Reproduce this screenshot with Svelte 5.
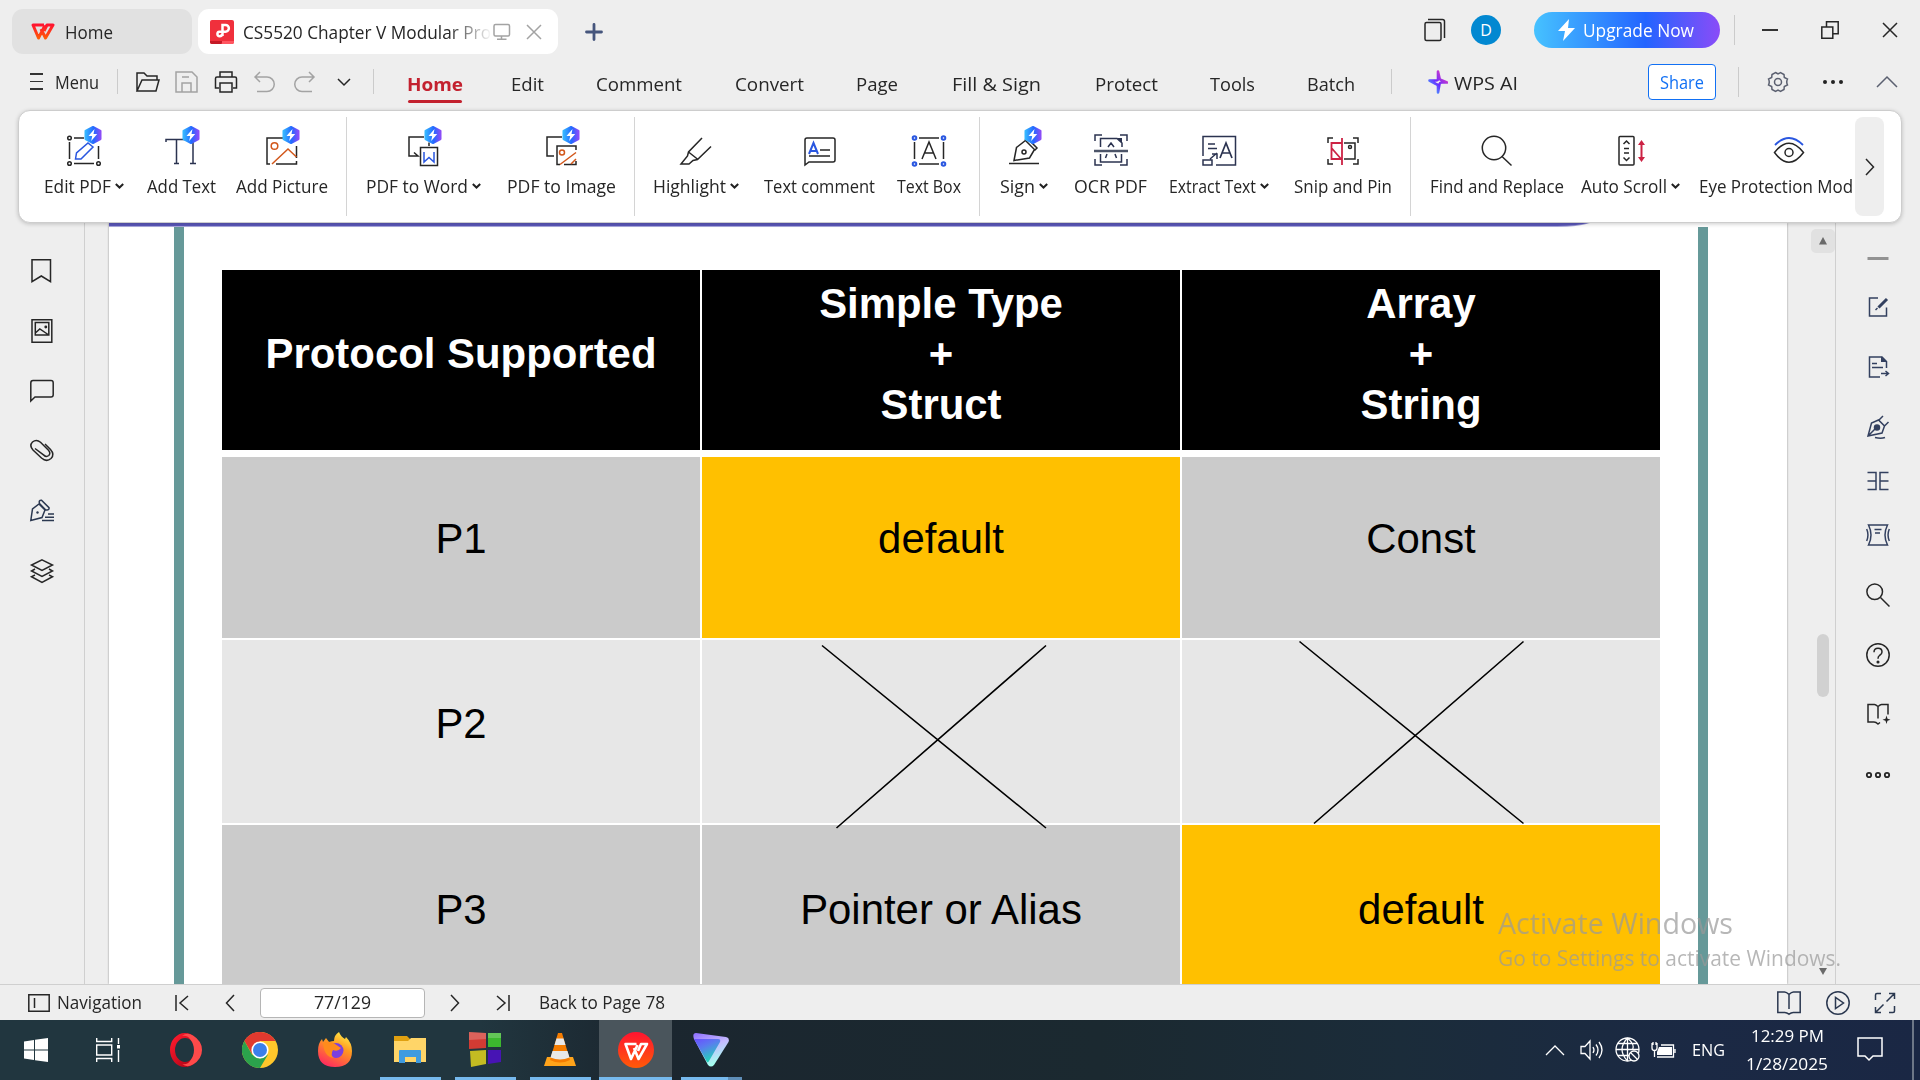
<script>
  // Squeezes or stretches a label horizontally so it takes exactly `width` pixels in the flow.
  function fit(node, width) {
    const natural = node.getBoundingClientRect().width;
    node.style.transform = `scaleX(${width / natural})`;
    node.style.marginRight = `${width - natural}px`;
  }

  const icons = {
    // quick access bar
    open: [24, 22, '<path d="M1 20V2h7l3 3h10v4M1 20 6 9h17l-3 11z"/>'],
    save: [24, 24, '<path d="M1 2h16l5 5v15H1zM7 22v-9h9v9M7 7h7"/>'],
    print: [24, 22, '<path d="M6 6V1h12v5M5 17H1.500V7.500q0-1.500 1.500-1.500h18q1.500 0 1.500 1.500V17H19M6 12h12v9H6z"/>'],
    undo: [24, 22, '<path d="M7 1 2 6l5 5M2 6h12a7.200 7.200 0 0 1 0 14.500H4"/>'],
    redo: [24, 22, '<path d="m17 1 5 5-5 5M22 6H10a7.200 7.200 0 0 0 0 14.500h10"/>'],
    down: [14, 8, '<path d="m1 1 6 6 6-6"/>'],
    // ribbon
    editPdf: [40, 40, '<circle cx="5.500" cy="12" r="1.800"/><circle cx="5.500" cy="37.500" r="1.800"/><circle cx="34.500" cy="37.500" r="1.800"/><path d="M10 12h10M5.500 16v17M10 37.500h20M34.500 20v13"/><path stroke="#2a57e0" d="m11.500 33 1-6L24 17l5 4-12 12z"/>'],
    addText: [40, 40, '<path stroke="#2b3350" d="M4 16v-2.500h19M14.500 13.500v24M12 37.500h5M31 15v22.500M28 37.500h6"/>'],
    addPicture: [40, 40, '<path d="M24 12H5v26h3M34.500 20v12M14 38h20.500v-3"/><g stroke="#d2571b"><circle cx="12.500" cy="20" r="3.300"/><path d="m10 38 16-15 8.500 8"/></g>'],
    pdfWord: [40, 40, '<path d="M25 20v-3.500M20 11H5v19h5l4 0-4-3.500"/><path d="M16.500 21.500h17v18h-17z"/><path stroke="#2a57e0" d="M20 26v10l5-4.500 5 4.500V26"/>'],
    pdfImage: [40, 40, '<path d="M20 11H5v19h5l2 0"/><path d="M34 24v-4H15v18.500h3M22 38.500h12V35"/><g stroke="#d2571b"><circle cx="20" cy="26.500" r="2.500"/><path d="m18 38.500 16-12M29 38l5-5"/></g>'],
    highlight: [40, 40, '<path d="M26 12 12.500 26l-1 4-6.500 8h8l4-3.500 4.500-1L35 20.500M12.500 26l9.500 7.500"/>'],
    comment: [40, 40, '<path d="M5 39V14q0-2 2-2h26q2 0 2 2v20q0 2-2 2H9z"/><path d="M20 24h10M9 30h21"/><path stroke="#2a57e0" stroke-width="2" d="m9 28 4.500-11L18 28M11 25h5"/>'],
    textBox: [40, 40, '<path d="M10 12h20M10 38h20M5.500 16v17M34.500 16v17"/><path d="m13 33 7-17 7 17M15.500 27h9"/><g stroke="#2a57e0" stroke-width="2"><circle cx="5.500" cy="12" r="1.800"/><circle cx="34.500" cy="12" r="1.800"/><circle cx="5.500" cy="38" r="1.800"/><circle cx="34.500" cy="38" r="1.800"/></g>'],
    sign: [40, 40, '<path d="M5 37.500h30M10 34.500l2.500-13 9-7 9 9-5 8.500zM21 14l2-2 10 10-2.500 2.500"/><circle cx="20" cy="26" r="2"/>'],
    ocr: [40, 40, '<path stroke="#2b3350" d="M4 15V9h7M29 9h7v6M4 33v6h7M29 39h7v-6M9.500 21v-8.500H26l5 4.500v4M9.500 28v8h21v-8M17 21l3-4 3 4M16 28l-1.500 4M24 28l1.500 4"/><path stroke="#4c5468" stroke-width="2.400" d="M3 25h34"/><path fill="#2b3350" stroke="none" d="M26 12h5v5z"/>'],
    extract: [40, 40, '<path stroke="#2b3350" d="M4 30V10.500h32.500V39H17M9 18h7M9 22.500h9M9 34h4v5H4v-5zM11 33l7-6M13 28h5v5"/><path stroke="#2b3350" stroke-width="1.700" d="m21 32 6-15 6 15M23 27h8"/>'],
    snip: [40, 40, '<path d="M5 17v-5h5M30 12h5v5M5 33v5h5M30 38h5v-5M21 17h11v16H21"/><circle cx="27" cy="21" r="1.500"/><path stroke="#cc2244" stroke-width="1.800" d="M19 12v27M19 17H8.500v16H19M8.500 22 19 34"/>'],
    find: [40, 40, '<circle cx="17" cy="22" r="11.700"/><path d="m25 30.500 9.500 9"/>'],
    autoScroll: [40, 40, '<rect x="8" y="10.500" width="15" height="28.500" rx="1"/><path d="m12.500 18 3-3 3 3M13 22.500h5M13 27h5M12.500 31.500l3 3 3-3"/><path stroke="#cc2244" stroke-width="2" d="M30.500 17v17"/><path fill="#cc2244" stroke="none" d="m30.500 14 3.500 5h-7zM30.500 36l3.500-5h-7z"/>'],
    eye: [40, 40, '<path stroke="#2a57e0" stroke-width="1.800" d="M6 19q14-14 28 0"/><path d="M5.500 26.500Q20 8 34.500 26.500 20 46 5.500 26.500z"/><circle cx="20" cy="26.500" r="4"/>'],
    // left rail
    bookmark: [24, 24, '<path d="M2 .7h18.500v22L11.300 17 2 22.700z"/>'],
    thumbs: [24, 24, '<path d="M2 .7h19.800v22.600H2z"/><path d="M5.300 3.500h13.500V16H5.300zM5.300 14l4.500-4 9 6"/><circle cx="15.800" cy="8" r=".7"/>'],
    bubble: [24, 24, '<path d="M.8 22V4q0-2.500 2.200-2.500h18q2.200 0 2.200 2.200v12q0 2.300-2.200 2.300H5z"/>'],
    clip: [24, 24, '<path d="M15 5 20.500 10.500q4.500 5 .5 9-4.500 4-9.500-.5L3 11q-4-4.500-.5-8 4-3.300 8 .3l8 8q2.500 3 .3 5.200-2.600 2-5-.4L5 9.500"/>'],
    penLines: [24, 24, '<path stroke="#2b3850" d="M.8 21.500 2.500 10l6.500-5 6 6-3 7.500zM9.500 4.500q-1-3.500 2-3.300l7.500 7.500q.5 3-3.500 2zM18 15h6M15 18.200h9M12 21.500h12"/><circle cx="7.500" cy="13.500" r="1.200" fill="#2b3850" stroke="none"/>'],
    layers: [24, 24, '<path d="M12 .8 22.500 6 12 11.500 1.500 6zM5 10l-3.500 2L12 17.500 22.500 12 19 10M5 16l-3.500 1.700L12 23.300l10.500-5.600L19 16"/>'],
    // right rail
    minus: [24, 24, '<path stroke="#929292" stroke-width="3" d="M1.500 12.500h21"/>'],
    compose: [24, 24, '<path d="M12 3H3.500v18h17v-8.500"/><path stroke-width="3" d="M12.500 12.500 21 4"/><path d="m9.500 15 2-2"/>'],
    exportDoc: [24, 24, '<path d="M14 22H3.500V2H16l4.500 4.500V13M6 8.500h5M6 12.500h11M15 18.500h7M19.500 16l3 2.500-3 2.500"/><path fill="#33405f" stroke="none" d="M15 1.500V7h6z"/>'],
    pen: [24, 24, '<path d="m2 21 3.500-13 7-3 6 6-2.500 7zM13 5l4-4M18.500 11 22.500 7M2 21l9-9M9 22.500q6 1.500 10 0"/><circle cx="11" cy="12.500" r="2.500" fill="#33405f"/>'],
    split: [24, 24, '<path d="M1.500 3.500H10v17H1.500M1.500 12H10M22.500 3.500H14v17h8.500M14 12h8.500"/>'],
    wrap: [24, 24, '<path d="M2.500 2h19q-5 10 0 20h-19q5-10 0-20zM.7 6q2.500 6 0 12M23.300 6q-2.500 6 0 12M8.500 6.500h7M9 10h5"/>'],
    search: [24, 24, '<circle cx="8.700" cy="8.700" r="7.800"/><path d="M14.500 14.500 23.500 23.500"/>'],
    help: [24, 24, '<circle cx="12" cy="12" r="11.200"/><path d="M8 9.300q0-4 4-4t4 3.700q0 2-2.500 3.500-1.500 1-1.500 3.300"/><circle cx="12" cy="19" r=".8" fill="currentColor"/>'],
    bookStar: [24, 24, '<path d="M12 16.500V4.500Q9.500 2.500 8.500 2.500H2V20h6q2 0 4 2l2-1.500M12 4.500q2.500-2 3.500-2H22v10"/><path fill="currentColor" stroke="none" d="m20.500 13.500 1 3.200 3 1-3 1-1 3.300-1-3.300-3-1 3-1z"/>'],
    rings: [24, 24, '<g stroke-width="1.800"><circle cx="3" cy="12" r="2.200"/><circle cx="12" cy="12" r="2.200"/><circle cx="21" cy="12" r="2.200"/></g>'],
    // status bar
    panel: [22, 18, '<path d="M.8.800h20.400v16.400H.800zM6.500 4v10"/>'],
    first: [14, 18, '<path d="M1 1v16M13 2 5 9l8 7"/>'],
    prev: [10, 18, '<path d="M9 1 1.500 9 9 17"/>'],
    next: [10, 18, '<path d="M1 1 8.500 9 1 17"/>'],
    last: [14, 18, '<path d="M13 1v16M1 2l8 7-8 7"/>'],
    book: [24, 24, '<path stroke="#2b3850" d="M12 3.500Q9.500 1 7.500 1H.8v20.500h7q2 0 4.200 1.700 2.200-1.700 4.200-1.700h7V1h-6.700Q14.500 1 12 3.500zM12 3.500V18"/>'],
    play: [24, 24, '<circle cx="12" cy="12" r="11.200"/><path d="M9.500 6.500v11l8-5.500z"/>'],
    full: [22, 22, '<path d="M1.500 8V3q0-1.500 1.500-1.500h4M15 1.500h5.500V7M12.500 9.500l7.500-7.500M1.500 15v5.500H7M2 20l7.500-7.500M20.500 14v5q0 1.500-1.500 1.500h-4"/>'],
    // window controls
    stack: [22, 24, '<rect x="1" y="4.500" width="16" height="18" rx="1.500"/><path d="M4 1.500h14.500q2 0 2 2V20"/>'],
    restore: [18, 18, '<path d="M.8 6h11v11.200h-11zM5.500 6V.8h11.700v12H12"/>'],
    close: [16, 16, '<path d="m1 1 14 14M15 1 1 15"/>'],
    monitor: [18, 18, '<rect x="1" y="1.500" width="15.500" height="11.500" rx="1.500"/><path d="M8.500 13v3M4 16.200h9.500"/>'],
    gear: [22, 22, '<path d="M8.500 1.500 11 3l2.500-1.500 3.500 2 .3 3L20.500 8q-1.500 3 0 6l-3.200 1.500-.3 3-3.500 2L11 19l-2.500 1.500-3.500-2-.3-3L1.500 14q1.500-3 0-6l3.200-1.500.3-3z"/><circle cx="11" cy="11" r="3.500"/>'],
    up: [22, 12, '<path d="m1 11 10-10 10 10"/>'],
    // tray
    caret: [20, 12, '<path d="m1 11 9-9 9 9"/>'],
    speaker: [24, 20, '<path d="M1 6.500h4L10 1v18l-5-5.500H1zM13 7q2 3 0 6M16 4.500q4 5.500 0 11M19 2q6 8 0 16"/>'],
    globe: [26, 26, '<circle cx="12.500" cy="12.500" r="11.500"/><path d="M12.500 1v23M1 12.500h23M3 6.500h19M3 18.500h12M12.500 1q-11 11.500 0 23M12.500 1q8 7 5 12"/><circle cx="19" cy="19" r="5" fill="#1c2b42"/><path d="m15.500 15.500 7 7"/>'],
    battery: [26, 18, '<path d="M10 4h12.500v12H6M24 8v4M1 2v5q0 2.500 2.500 2.500T6 7V2M2 1v3M5 1v3M3.500 10v6"/><path fill="#fff" stroke="none" d="M8 6h13v8H6v-3z"/>'],
    notify: [26, 26, '<path d="M1 1h24v18H16l-4 4-4-4H1z"/>'],
  };

  const tabs = [
    { t: 'Home', gap: 33, w: 56, on: true }, { t: 'Edit', gap: 48, w: 33 },
    { t: 'Comment', gap: 52, w: 86 }, { t: 'Convert', gap: 53, w: 69 },
    { t: 'Page', gap: 52, w: 42 }, { t: 'Fill & Sign', gap: 54, w: 89 },
    { t: 'Protect', gap: 54, w: 63 }, { t: 'Tools', gap: 52, w: 45 }, { t: 'Batch', gap: 52, w: 48 },
  ];

  const groups = [
    { pad: 25, items: [
      { t: 'Edit PDF', i: 'editPdf', w: 67, gap: 0, menu: true, pro: true },
      { t: 'Add Text', i: 'addText', w: 69, gap: 23, pro: true },
      { t: 'Add Picture', i: 'addPicture', w: 92, gap: 20, pro: true }] },
    { pad: 19, items: [
      { t: 'PDF to Word', i: 'pdfWord', w: 102, gap: 0, menu: true, pro: true },
      { t: 'PDF to Image', i: 'pdfImage', w: 109, gap: 26, pro: true }] },
    { pad: 18, items: [
      { t: 'Highlight', i: 'highlight', w: 73, gap: 0, menu: true },
      { t: 'Text comment', i: 'comment', w: 111, gap: 25 },
      { t: 'Text Box', i: 'textBox', w: 64, gap: 22 }] },
    { pad: 20, items: [
      { t: 'Sign', i: 'sign', w: 35, gap: 0, menu: true, pro: true },
      { t: 'OCR PDF', i: 'ocr', w: 73, gap: 26 },
      { t: 'Extract Text', i: 'extract', w: 87, gap: 22, menu: true },
      { t: 'Snip and Pin', i: 'snip', w: 98, gap: 25 }] },
    { pad: 19, items: [
      { t: 'Find and Replace', i: 'find', w: 134, gap: 0 },
      { t: 'Auto Scroll', i: 'autoScroll', w: 86, gap: 17, menu: true },
      { t: 'Eye Protection Mod', i: 'eye', w: 154, gap: 19, cut: true }] },
  ];

  const leftRail = ['bookmark', 'thumbs', 'bubble', 'clip', 'penLines', 'layers'];
  const rightRail = [
    ['minus', 0], ['compose', 25], ['exportDoc', 36], ['pen', 36], ['split', 30],
    ['wrap', 30], ['search', 36], ['help', 36], ['bookStar', 35], ['rings', 37],
  ];
</script>

{#snippet icon(name)}
  {@const [w, h, body] = icons[name]}
  <svg class="icon" width={w} height={h} viewBox="0 0 {w} {h}">{@html body}</svg>
{/snippet}

<svg class="defs" width="0" height="0">
  <defs>
    <linearGradient id="hex"><stop offset="0" stop-color="#35b6ff" /><stop offset=".55" stop-color="#2468ff" /><stop offset="1" stop-color="#8a4cf8" /></linearGradient>
    <linearGradient id="spark" x1="0" y1="1" x2="1" y2="0"><stop offset="0" stop-color="#38d0ff" /><stop offset=".45" stop-color="#6a2cff" /><stop offset="1" stop-color="#ff3fb0" /></linearGradient>
    <linearGradient id="wps" x1="0" y1="0" x2="0" y2="1"><stop offset="0" stop-color="#ff1430" /><stop offset="1" stop-color="#ff5a08" /></linearGradient>
    <linearGradient id="opera" x1="0" y1="0" x2="1" y2="1"><stop offset="0" stop-color="#ff1b2d" /><stop offset="1" stop-color="#a70014" /></linearGradient>
    <linearGradient id="fox" x1=".8" y1="0" x2=".3" y2="1"><stop offset="0" stop-color="#fff14a" /><stop offset=".4" stop-color="#ff9a1f" /><stop offset="1" stop-color="#ff2a5f" /></linearGradient>
    <linearGradient id="vpn" x1="0" y1="0" x2=".5" y2="1"><stop offset="0" stop-color="#6a4dff" /><stop offset=".4" stop-color="#5b7af0" /><stop offset="1" stop-color="#22d6b8" /></linearGradient>
    <linearGradient id="vpnEdge" x1="0" y1="0" x2=".4" y2="1"><stop offset="0" stop-color="#8d6dff" /><stop offset=".5" stop-color="#c5b9ff" /><stop offset="1" stop-color="#a5fff0" /></linearGradient>
  </defs>
</svg>

<div class="screen">
  <header class="titlebar">
    <div class="doc-tab idle">
      <svg class="wlogo" width="24" height="17" viewBox="0 0 24 17"><path fill="none" stroke="url(#wps)" stroke-width="3" stroke-linejoin="round" d="M13 2H2l5.500 13L14 2.500M10 6l4.500 9L22 2h-6l-3 6" /></svg>
      <span class="txt" use:fit={48}>Home</span>
    </div>
    <div class="doc-tab live">
      <svg width="24" height="24" viewBox="0 0 24 24"><path fill="#f0303c" d="M2 0h20q2 0 2 2v20q0 2-2 2H2q-2 0-2-2V2q0-2 2-2z" /><path fill="#c41a26" d="M0 21h13l-2 3H2q-2 0-2-2z" /><path fill="#ff5560" d="M12 21h12v1q0 2-2 2H12z" /><path fill="none" stroke="#fff" stroke-width="2.500" d="M12.500 16V5h3a3.300 3.300 0 0 1 0 6.700H9.500a2.300 2.300 0 1 0 2.500 2.500" /></svg>
      <div class="doc-name"><span class="txt" use:fit={248}>CS5520 Chapter V Modular Pro</span></div>
      <div class="grey monitor">{@render icon('monitor')}</div>
      <div class="grey">{@render icon('close')}</div>
    </div>
    <svg class="plus" width="18" height="18" viewBox="0 0 18 18"><path stroke="#45557c" stroke-width="2.800" stroke-linecap="round" d="M9 1.500v15M1.500 9h15" /></svg>
    <div class="window-tools">
      {@render icon('stack')}
      <div class="avatar">D</div>
      <div class="upgrade">
        <svg width="18" height="22" viewBox="0 0 18 22"><path fill="#fff" d="M11 0 0 12h7L5 22 17 9h-7z" /></svg>
        <span class="txt" use:fit={111}>Upgrade Now</span>
      </div>
      <i class="rule tall"></i>
      <i class="min"></i>
      <div class="restore">{@render icon('restore')}</div>
      <div class="close">{@render icon('close')}</div>
    </div>
  </header>

  <nav class="menubar">
    <div class="burger"><i></i><i></i><i></i></div>
    <span class="txt menu-label" use:fit={44}>Menu</span>
    <i class="rule first"></i>
    <div class="quick">
      {@render icon('open')}
      <span class="grey">{@render icon('save')}</span>
      {@render icon('print')}
      <span class="grey">{@render icon('undo')}</span>
      <span class="grey">{@render icon('redo')}</span>
    </div>
    <div class="quick-more">{@render icon('down')}</div>
    <i class="rule"></i>
    {#each tabs as tab}
      <div class="tab" class:on={tab.on} style:margin-left="{tab.gap}px"><span class="txt" use:fit={tab.w}>{tab.t}</span></div>
    {/each}
    <i class="rule ai-rule"></i>
    <svg class="spark" width="20" height="24" viewBox="0 0 20 24"><path fill="none" stroke="url(#spark)" stroke-width="2.600" stroke-linejoin="round" d="M10 1.500V9q0 1.500-2 1.500H1.500L8 14q2 .5 2 2.500v6L11.500 14q.3-1.500 2-1.500H19L13 10q-1.500-.5-1.500-2z" /></svg>
    <span class="txt ai" use:fit={64}>WPS AI</span>
    <div class="share"><span class="txt" use:fit={44}>Share</span></div>
    <i class="rule share-rule"></i>
    <div class="gear">{@render icon('gear')}</div>
    <div class="dots"><i></i><i></i><i></i></div>
    <div class="gear fold">{@render icon('up')}</div>
  </nav>

  <section class="ribbon">
    <div class="ribbon-clip">
      {#each groups as group, g}
        {#if g > 0}<i class="split"></i>{/if}
        <div class="group" style:padding-left="{group.pad}px">
          {#each group.items as item}
            <div class="tool" style:margin-left="{item.gap}px">
              <div class="tool-icon">
                {@render icon(item.i)}
                {#if item.pro}
                  <svg class="badge" width="20" height="20" viewBox="0 0 20 20"><path fill="url(#hex)" stroke="url(#hex)" stroke-width="2" stroke-linejoin="round" d="m10 2 7.500 4v8L10 18l-7.500-4V6z" /><path fill="#fff" d="M11.500 4 5.500 11h3.700l-1 5 6-7h-3.700z" /></svg>
                {/if}
              </div>
              <div class="tool-label" class:cut={item.cut}>
                <span class="txt" use:fit={item.w}>{item.t}</span>
                {#if item.menu}<svg width="9" height="6" viewBox="0 0 9 6"><path fill="none" stroke="#222" stroke-width="2" d="m.8 1 3.700 3.500L8.200 1" /></svg>{/if}
              </div>
            </div>
          {/each}
        </div>
      {/each}
    </div>
    <div class="scroll-next">{@render icon('next')}</div>
  </section>

  <main class="workspace">
    <aside class="rail left">
      {#each leftRail as name}{@render icon(name)}{/each}
    </aside>
    <div class="page">
      <svg class="swoosh" width="1678" height="4" viewBox="0 0 1678 4"><path fill="#a9a7dc" d="M0 0h1481q-12 4-33 4H0z" /><path fill="#5b58ba" d="M0 0h1479q-12 3-31 3H0z" /></svg>
      <div class="frame">
        <div class="table">
          <div class="cell head">Protocol Supported</div>
          <div class="cell head">Simple Type<br />+<br />Struct</div>
          <div class="cell head">Array<br />+<br />String</div>
          <div class="cell r1">P1</div>
          <div class="cell r1 gold">default</div>
          <div class="cell r1">Const</div>
          <div class="cell r2">P2</div>
          <div class="cell r2"></div>
          <div class="cell r2"></div>
          <div class="cell r3">P3</div>
          <div class="cell r3">Pointer or Alias</div>
          <div class="cell r3 gold">default</div>
        </div>
        <svg class="crosses" width="1438" height="200" viewBox="222 635 1438 200"><path fill="none" stroke="#000" stroke-width="1.600" d="M822 645.500 1046 828M1046 645.500 836.500 828M1299.500 641.500l224 182M1523.500 641.500l-209.500 182" /></svg>
      </div>
    </div>
    <div class="scrollbar">
      <div class="arrow-up"><svg width="10" height="8" viewBox="0 0 10 8"><path fill="#6a6a6a" d="M5 0l4 7.500H1z" /></svg></div>
      <div class="thumb"></div>
      <svg class="arrow-down" width="8" height="7" viewBox="0 0 8 7"><path fill="#6a6a6a" d="M0 0h8L4 7z" /></svg>
    </div>
    <aside class="rail right">
      {#each rightRail as [name, gap]}
        <div class="slot" class:navy={['compose', 'exportDoc', 'pen', 'split', 'wrap'].includes(name)} style:margin-top="{gap}px">{@render icon(name)}</div>
      {/each}
    </aside>
    <div class="watermark">
      <span class="big" use:fit={235}>Activate Windows</span>
      <span class="small" use:fit={343}>Go to Settings to activate Windows.</span>
    </div>
  </main>

  <footer class="status">
    {@render icon('panel')}
    <span class="txt nav-name" use:fit={85}>Navigation</span>
    <span class="s1">{@render icon('first')}</span>
    <span class="s2">{@render icon('prev')}</span>
    <div class="pager"><span class="txt" use:fit={57}>77/129</span></div>
    <span class="s3">{@render icon('next')}</span>
    <span class="s4">{@render icon('last')}</span>
    <span class="txt back" use:fit={126}>Back to Page 78</span>
    <div class="views">{@render icon('book')}{@render icon('play')}{@render icon('full')}</div>
  </footer>

  <div class="taskbar">
    <div class="app start">
      <svg width="24" height="24" viewBox="0 0 24 24"><path fill="#fff" d="M0 3.400 10 2v9.500H0zM11 1.800 24 0v11.500H11zM0 12.500h10V22L0 20.600zM11 12.500h13V24l-13-1.800z" /></svg>
    </div>
    <div class="app views-btn">
      <svg width="24" height="24" viewBox="0 0 24 24"><path fill="none" stroke="#fff" stroke-width="1.400" d="M.7 0v3.500h15V0M.7 7h15v10h-15zM.7 24v-3.500h15V24M22.500 0v6M22.500 12v12" /><path fill="#fff" d="M21 7h3v3.500h-3z" /></svg>
    </div>
    <div class="app">
      <svg width="36" height="36" viewBox="0 0 36 36"><ellipse cx="18" cy="18" rx="12.500" ry="14.500" fill="none" stroke="url(#opera)" stroke-width="5" /><path fill="#ff4a4a" d="M15 4q5-4 11-.5Q35 9 35 18t-9 14.500q-6 3.500-11-.5 5 1 8-3 4-5 4-11t-4-11q-3-4-8-3z" /></svg>
    </div>
    <div class="app">
      <svg width="36" height="36" viewBox="0 0 36 36"><circle cx="18" cy="18" r="18" fill="#ffc72b" /><path fill="#e0392f" d="M2.400 9A18 18 0 0 1 33.600 9H18l-8 13z" /><path fill="#2ba24c" d="M2.400 9A18 18 0 0 0 18 36l8-13.500-8 4-8-4z" /><circle cx="18" cy="18" r="8.600" fill="#fff" /><circle cx="18" cy="18" r="7" fill="#3b7fea" /></svg>
    </div>
    <div class="app">
      <svg width="34" height="36" viewBox="0 0 34 36"><path fill="url(#fox)" d="M21 0q2 5 6 7l1-2q6 6 6 14 0 16-17 16T0 19q0-8 4-12l1 3 3-4 3 4q3-1 5-1 0-6 5-9z" /><circle cx="18" cy="18.500" r="7.500" fill="#7b3fe0" /><path fill="#ff8b1c" d="M5 11q6-3 12 1l6 4q-3 4-8 2-3 5 1 8-10-1-11-15z" /></svg>
    </div>
    <div class="app run">
      <svg width="34" height="28" viewBox="0 0 34 28"><path fill="#e0a010" d="M1 0h13l3 3v3H1z" /><path fill="#ffd568" d="M1 5h14l3-3h15v24H1z" /><path fill="#3e9be0" d="M6 15q0-1 1-1h20q1 0 1 1v12h-5v-6H12v6H6z" /></svg>
    </div>
    <div class="app run">
      <svg width="34" height="36" viewBox="0 0 34 36"><path fill="#d23b33" d="m1 0 17 1v15L1 17z" /><path fill="#3cb82e" d="M20 1h13v14H20z" /><path fill="#c4bc22" d="m2 19 16-1v14L3 35z" /><path fill="#4714b4" d="M20 18h13v12l-13 2z" /><path fill="#fff" opacity=".2" d="m1 0 17 1v6L1 8zM20 1h13v5H20z" /></svg>
    </div>
    <div class="app run">
      <svg width="34" height="36" viewBox="0 0 34 36"><path fill="#ffa31a" d="M4 25h26l3 9H1z" /><path fill="#f57c00" d="M15 1h4l8 27q-10 5-20 0z" /><path fill="#e8e8e8" d="m13.500 6.500h7L22.500 13h-11zM9.500 19h15l2 6.500q-9.500 4-19 0z" /></svg>
    </div>
    <div class="app current">
      <svg width="36" height="36" viewBox="0 0 36 36"><circle cx="18" cy="18" r="18" fill="url(#wps)" /><path fill="none" stroke="#fff" stroke-width="2.600" stroke-linejoin="round" d="M18.500 12H7.500l5.500 15 6.500-14M16 16l4.500 11L29 12h-6l-3 7" /></svg>
    </div>
    <div class="app vpn">
      <svg width="36" height="34" viewBox="0 0 36 34"><path fill="url(#vpnEdge)" d="M3 0 33 4q4 1 2.500 5L21 32q-3 3-6 0L1 6Q-1 0 3 0z" /><path fill="url(#vpn)" d="M1 6h24q3 0 2 3L16 28q-1 2-2 1z" /></svg>
      <i></i>
    </div>
    <div class="tray">
      <span class="t1">{@render icon('caret')}</span>
      <span class="t2">{@render icon('speaker')}</span>
      <span class="t3">{@render icon('globe')}</span>
      <span class="t4">{@render icon('battery')}</span>
      <span class="txt lang" use:fit={33}>ENG</span>
      <div class="clock"><div><span class="txt" use:fit={73}>12:29 PM</span></div><div><span class="txt" use:fit={82}>1/28/2025</span></div></div>
      {@render icon('notify')}
      <i class="peek"></i>
    </div>
  </div>
</div>

<style>
  :global(body) { margin: 0; overflow: hidden; }
  .screen {
    width: 1920px; height: 1080px; display: flex; flex-direction: column;
    background: #eee; color: #262626; font: 17.5px/24px 'Open Sans', sans-serif; overflow: hidden;
  }
  .defs { position: absolute; }
  svg { display: block; flex: none; }
  .icon { fill: none; stroke: currentColor; stroke-width: 1.5; }
  .icon, .badge { overflow: visible; }
  .txt, .big, .small { display: inline-block; white-space: nowrap; transform-origin: 0 50%; flex: none; }
  i { display: block; flex: none; }
  .grey { color: #a3a3a3; }
  .rule { width: 1px; height: 25px; background: #cbcbcb; }

  .titlebar { height: 54px; display: flex; align-items: flex-start; padding-left: 12px; flex: none; }
  .doc-tab { height: 45px; margin-top: 9px; border-radius: 11px; display: flex; align-items: center; box-sizing: border-box; }
  .idle { width: 180px; background: #e1e1e1; padding-left: 19px; gap: 10px; }
  .wlogo { margin-top: -1px; }
  .live { width: 360px; background: #fff; margin-left: 6px; padding-left: 12px; }
  .doc-name { width: 248px; margin-left: 9px; mask-image: linear-gradient(90deg, #000 205px, transparent 249px); }
  .live .monitor { margin: 0 15px 0 2px; }
  .plus { margin: 23px 0 0 27px; }
  .window-tools { margin-left: auto; height: 60px; display: flex; align-items: center; padding-right: 22px; }
  .avatar { width: 30px; height: 30px; border-radius: 50%; background: #0288d1; color: #fff; margin-left: 25px; text-align: center; font-size: 16px; line-height: 30px; }
  .upgrade { width: 186px; height: 36px; box-sizing: border-box; border-radius: 18px; margin-left: 33px; padding-left: 24px; gap: 7px; display: flex; align-items: center; color: #fff; background: linear-gradient(90deg, #46c2ff, #2364ff 60%, #8a4cf8); }
  .tall { height: 30px; margin-left: 14px; }
  .min { width: 16px; height: 2px; background: #333; margin-left: 27px; }
  .restore { margin-left: 43px; }
  .close { margin-left: 43px; }

  .menubar { height: 57px; display: flex; align-items: center; padding: 0 22px 2px 30px; box-sizing: border-box; flex: none; }
  .burger { width: 13px; display: grid; gap: 6px; }
  .burger i { height: 1.5px; background: #333; }
  .menu-label { margin-left: 12px; }
  .first { margin: 0 18px; }
  .quick { display: flex; align-items: center; gap: 15px; }
  .quick-more { margin: 0 22px 0 21px; }
  .tab { position: relative; margin-top: 4px; }
  .ai { margin-top: 3px; }
  .on { color: #c3212f; font-weight: 700; }
  .on::after { content: ''; position: absolute; left: 1px; right: 1px; bottom: -7px; height: 3px; border-radius: 2px; background: #c3212f; }
  .ai-rule { margin-left: 36px; }
  .spark { margin: 0 6px 0 36px; }
  .share { margin-left: 130px; width: 68px; height: 36px; box-sizing: border-box; border: 1.5px solid #1170f4; border-radius: 4px; background: #fff; color: #1170f4; display: flex; align-items: center; justify-content: center; }
  .share-rule { height: 30px; margin-left: 22px; }
  .gear { color: #5b6070; margin-left: 28px; }
  .dots { display: flex; gap: 4px; margin-left: 34px; }
  .dots i { width: 4px; height: 4px; border-radius: 50%; background: #222; }
  .fold { margin-left: auto; }

  .ribbon { position: relative; z-index: 2; height: 113px; margin: -1px 18px 0; box-sizing: border-box; border: 1px solid #cdcdcd; border-radius: 12px; background: #fff; box-shadow: 0 1px 4px #0003; display: flex; padding: 6px 16px 5px 0; flex: none; }
  .ribbon-clip { width: 1836px; height: 100px; display: flex; overflow: hidden; flex: none; }
  .split { width: 1px; height: 99px; background: #d4d4d4; margin-left: 18px; }
  .group { display: flex; flex: none; }
  .tool { display: flex; flex-direction: column; align-items: center; padding-top: 9px; }
  .tool-icon { position: relative; width: 40px; height: 40px; }
  .badge { position: absolute; left: 19px; top: -1px; }
  .tool-label { display: flex; align-items: center; gap: 4px; margin-top: 8px; }
  .cut { padding-right: 26px; }
  .scroll-next { width: 29px; height: 99px; border-radius: 8px; background: #eee; display: flex; align-items: center; justify-content: center; }

  .workspace { position: relative; height: 761px; display: flex; flex: none; }
  .rail { box-sizing: border-box; display: flex; flex-direction: column; flex: none; }
  .left { width: 85px; border-right: 1px solid #cfcfcf; padding: 36px 0 0 30px; gap: 36px; margin-right: 24px; }
  .page { width: 1678px; background: #fff; overflow: hidden; box-shadow: 0 0 2px #0006; clip-path: inset(0 -3px 0 -3px); display: flex; flex-direction: column; }
  .frame { position: relative; width: 1514px; height: 761px; flex: none; margin-left: 65px; border: solid #699; border-width: 0 10px; }
  .table { display: grid; grid-template-columns: 478px 478px 478px; grid-template-rows: 180px 181px 183px 184px; column-gap: 2px; padding: 43px 0 0 38px; font: 41.9px/50.5px 'Liberation Sans', Arial, sans-serif; color: #000; }
  .cell { background: #cbcbcb; text-align: center; box-sizing: border-box; }
  .head { background: #000; color: #fff; font-weight: 700; padding-bottom: 11px; display: grid; place-content: center; }
  .r1 { margin-top: 7px; height: 181px; padding-top: 57px; }
  .r2 { margin-top: 9px; height: 183px; padding-top: 59px; background: #e7e7e7; }
  .r3 { margin-top: 11px; height: 184px; padding-top: 60px; }
  .gold { background: #ffc000; }
  .crosses { position: absolute; left: 38px; top: 408px; }
  .scrollbar { width: 49px; box-sizing: border-box; border-right: 1px solid #cfcfcf; display: flex; flex-direction: column; align-items: flex-end; padding-top: 6px; }
  .arrow-up { width: 24px; height: 24px; border-radius: 5px; background: #e1e1e1; display: grid; place-items: center; }
  .thumb { width: 12px; height: 63px; border-radius: 6px; background: #d1d1d1; margin: 381px 6px 0 0; }
  .arrow-down { margin: 271px 8px 0 0; }
  .right { padding: 23px 0 0 30px; }
  .slot { height: 24px; }
  .navy { color: #33405f; }
  .watermark { position: absolute; left: 1498px; top: 680px; color: #9a9a9a; opacity: .7; display: flex; flex-direction: column; align-items: flex-start; }
  .big { font-size: 29px; line-height: 40px; }
  .small { font-size: 21.500px; line-height: 30px; }

  .status { height: 36px; border-top: 1px solid #cfcfcf; box-sizing: border-box; display: flex; align-items: center; padding: 0 24px 0 28px; flex: none; }
  .status .txt { margin-top: -2px; }
  .nav-name { margin-left: 7px; }
  .s1 { margin-left: 33px; }
  .s2 { margin-left: 36px; }
  .s3 { margin-left: 25px; }
  .s4 { margin-left: 36px; }
  .back { margin-left: 29px; }
  .pager { width: 165px; height: 30px; margin-left: 25px; box-sizing: border-box; border: 1px solid #b5b5b5; border-radius: 4px; background: #fff; display: flex; align-items: center; justify-content: center; }
  .views { margin-left: auto; display: flex; align-items: center; gap: 24.5px; color: #2b3850; }

  .taskbar { height: 60px; display: flex; flex: none; background: linear-gradient(90deg, #21363f 0, #21363f 480px, #1b262f 640px, #1b2930 1100px, #1b2c3a 1400px, #1b2944 1700px, #1a2744); }
  .app { width: 75px; box-sizing: border-box; display: flex; align-items: center; justify-content: center; position: relative; }
  .start { width: 72px; }
  .views-btn { padding-right: 3px; }
  .run::after { content: ''; position: absolute; left: 8px; right: 6px; bottom: 0; height: 3px; background: #76b9ed; }
  .current { width: 73px; margin-left: 2px; background: #4a555c; border-bottom: 3px solid #76b9ed; padding-top: 3px; }
  .vpn { margin-left: 1px; }
  .vpn i { position: absolute; left: 8px; bottom: 0; width: 47px; height: 3px; background: #76b9ed; border-right: 14px solid #5f8eb8; }
  .tray { margin-left: auto; display: flex; align-items: center; color: #fff; padding-right: 6px; font-size: 16.500px; }
  .t1 { margin-right: 14.5px; }
  .t2 { margin-right: 11px; }
  .t3 { margin-right: 10.5px; }
  .t4 { margin-right: 11px; }
  .tray span :global(.icon) { stroke-width: 1.3; }
  .lang { margin-left: 4px; }
  .clock { width: 82px; margin-left: 21px; margin-right: 29px; text-align: center; line-height: 28px; }
  .peek { width: 2px; height: 60px; background: #6d7787; margin-left: 29px; }
</style>
